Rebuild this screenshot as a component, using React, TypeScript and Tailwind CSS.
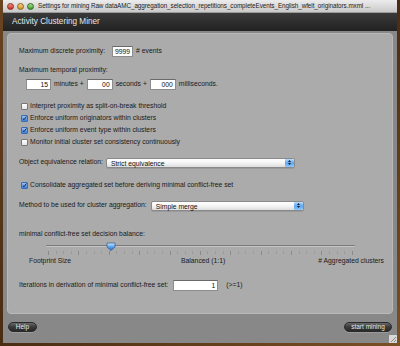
import React from "react";

const font = { fontFamily: '"Liberation Sans", Arial, sans-serif' };

function Check({ on }: { on?: boolean }) {
  return on ? (
    <div className="w-[7px] h-[7px] rounded-[1px] border border-[#3d6bb0] bg-gradient-to-b from-[#9cc3f2] to-[#3b7bd6] flex items-center justify-center">
      <svg width="7" height="7" viewBox="0 0 7 7">
        <path d="M1.2 3.6 L2.8 5.2 L6.2 0.6" stroke="#0b1f44" strokeWidth="1.3" fill="none" />
      </svg>
    </div>
  ) : (
    <div className="w-[7px] h-[7px] rounded-[1px] border border-[#777] bg-gradient-to-b from-[#ffffff] to-[#e4e4e4]" />
  );
}

function CheckRow({ on, label }: { on?: boolean; label: string }) {
  return (
    <div className="h-[12px] flex items-center gap-[2px] pl-[13px]">
      <Check on={on} />
      <span>{label}</span>
    </div>
  );
}

function Field({ value, w }: { value: string; w: string }) {
  return (
    <div className={`${w} h-[11px] bg-white border border-[#8c8c8c] border-t-[#6a6a6a] text-right pr-[2px] leading-[10px] text-[#111]`}>
      {value}
    </div>
  );
}

function Select({ value, w }: { value: string; w: string }) {
  return (
    <div className={`${w} h-[10px] flex rounded-[2px] border border-[#8a8a8a] bg-gradient-to-b from-[#ffffff] via-[#f4f4f4] to-[#dcdcdc] shadow-[0_1px_0_#9a9a9a]`}>
      <span className="flex-1 pl-[4px] leading-[9px] text-[#111]">{value}</span>
      <div className="w-[9px] h-full rounded-r-[2px] bg-gradient-to-b from-[#b9dcfb] via-[#5ea6ee] to-[#8cc8fb] flex flex-col items-center justify-center gap-[1px]">
        <svg width="3" height="2" viewBox="0 0 3 2"><path d="M0 2 L1.5 0 L3 2 Z" fill="#10203a" /></svg>
        <svg width="3" height="2" viewBox="0 0 3 2"><path d="M0 0 L1.5 2 L3 0 Z" fill="#10203a" /></svg>
      </div>
    </div>
  );
}

function Pill({ label, w }: { label: string; w: string }) {
  return (
    <div className={`${w} h-[10px] rounded-full border border-[#2a2a2a] bg-gradient-to-b from-[#6a6a6a] via-[#3a3a3a] to-[#2a2a2a] text-[#e8e8e8] text-[6.5px] flex items-center justify-center shadow-[0_1px_0_#9a9a9a]`}>
      {label}
    </div>
  );
}

export default function App() {
  const ticks = Array.from({ length: 41 }, (_, i) => i);
  return (
    <div
      className="w-[400px] h-[346px] overflow-hidden bg-gradient-to-br from-[#6a4421] via-[#4a2c12] to-[#7a5025] pl-[3px]"
      style={font}
    >
      <div className="w-[394px] h-[343px] flex flex-col bg-[#888888]">
        {/* title bar */}
        <div className="h-[13px] flex items-center bg-gradient-to-b from-[#ececec] to-[#c9c9c9] border-b border-[#9a9a9a]">
          <div className="flex gap-[3px] pl-[4px] shrink-0">
            <div className="w-[7px] h-[7px] rounded-full bg-gradient-to-b from-[#f08a7c] to-[#c8281c] border border-[#8a2a20]" />
            <div className="w-[7px] h-[7px] rounded-full bg-gradient-to-b from-[#f7d27a] to-[#d0901a] border border-[#8a6420]" />
            <div className="w-[7px] h-[7px] rounded-full bg-gradient-to-b from-[#a6e48a] to-[#3e9c2a] border border-[#2e6a20]" />
          </div>
          <span className="ml-[4px] text-[6.3px] tracking-[-0.05px] text-[#222] whitespace-nowrap">
            Settings for mining Raw dataAMC_aggregation_selection_repetitions_completeEvents_English_wfelt_originators.mxml ...
          </span>
        </div>
        {/* header */}
        <div className="h-[18px] flex items-center bg-gradient-to-b from-[#3a3a3a] to-[#222222] pl-[9px] text-[8.2px] text-[#e6e6e6]">
          Activity Clustering Miner
        </div>
        {/* panel */}
        <div className="px-[4px] pt-[2px]">
          <div className="h-[281px] rounded-[4px] bg-[#ababab] border border-[#b9b9b9] flex flex-col text-[6.8px] text-[#1a1a1a]">
            <div className="mt-[12px] h-[11px] flex items-center pl-[11px]">
              <span>Maximum discrete proximity:</span>
              <div className="ml-[7px]"><Field value="9999" w="w-[21px]" /></div>
              <span className="ml-[3px]"># events</span>
            </div>
            <div className="mt-[8px] h-[10px] flex items-center pl-[11px]">Maximum temporal proximity:</div>
            <div className="mt-[3px] h-[12px] flex items-center pl-[18px]">
              <Field value="15" w="w-[25px]" />
              <span className="ml-[3px]">minutes +</span>
              <div className="ml-[3px]"><Field value="00" w="w-[26px]" /></div>
              <span className="ml-[3px]">seconds +</span>
              <div className="ml-[3px]"><Field value="000" w="w-[26px]" /></div>
              <span className="ml-[3px]">milliseconds.</span>
            </div>
            <div className="mt-[10px] flex flex-col">
              <CheckRow label="Interpret proximity as split-on-break threshold" />
              <CheckRow on label="Enforce uniform originators within clusters" />
              <CheckRow on label="Enforce uniform event type within clusters" />
              <CheckRow label="Monitor initial cluster set consistency continuously" />
            </div>
            <div className="mt-[9px] h-[11px] flex items-center pl-[11px]">
              <span>Object equivalence relation:</span>
              <div className="ml-[3px]"><Select value="Strict equivalence" w="w-[189px]" /></div>
            </div>
            <div className="mt-[11px]">
              <CheckRow on label="Consolidate aggregated set before deriving minimal conflict-free set" />
            </div>
            <div className="mt-[9px] h-[11px] flex items-center pl-[11px]">
              <span>Method to be used for cluster aggregation:</span>
              <div className="ml-[4px]"><Select value="Simple merge" w="w-[153px]" /></div>
            </div>
            <div className="mt-[18px] h-[10px] flex items-center pl-[11px]">minimal conflict-free set decision balance:</div>
            {/* slider */}
            <div className="mt-[2px] ml-[38px] w-[309px] h-[10px] relative flex items-center">
              <div className="w-full h-[2px] bg-[#7a7a7a] border-b border-[#c4c4c4] rounded-full" />
              <svg className="absolute left-[60px] top-[1px]" width="10" height="9" viewBox="0 0 10 9">
                <defs>
                  <linearGradient id="th" x1="0" y1="0" x2="0" y2="1">
                    <stop offset="0" stopColor="#d4ecff" />
                    <stop offset="0.5" stopColor="#5aa4ee" />
                    <stop offset="1" stopColor="#2f6fc4" />
                  </linearGradient>
                </defs>
                <path d="M1 1 H9 V5 L5 8.5 L1 5 Z" fill="url(#th)" stroke="#3a5f96" strokeWidth="0.8" />
              </svg>
            </div>
            <div className="ml-[40px] w-[305px] h-[4px] flex justify-between">
              {ticks.map((i) => (
                <div key={i} className={i % 4 === 0 ? "w-px h-[4px] bg-[#8a8a8a]" : "w-px h-[3px] bg-[#9a9a9a]"} />
              ))}
            </div>
            <div className="mt-[1px] ml-[21px] w-[355px] h-[10px] grid grid-cols-[152px_auto_1fr] items-center">
              <span>Footprint Size</span>
              <span>Balanced (1:1)</span>
              <span className="justify-self-end"># Aggregated clusters</span>
            </div>
            <div className="mt-[14px] h-[11px] flex items-center pl-[11px]">
              <span>Iterations in derivation of minimal conflict-free set:</span>
              <div className="ml-[5px]"><Field value="1" w="w-[45px]" /></div>
              <span className="ml-[8px]">(&gt;=1)</span>
            </div>
          </div>
        </div>
        {/* footer */}
        <div className="flex-1 flex items-center justify-between px-[5px] pb-[3px] relative">
          <Pill label="Help" w="w-[29px]" />
          <Pill label="start mining" w="w-[48px]" />
          <svg className="absolute right-0 bottom-0" width="8" height="8" viewBox="0 0 8 8">
            <rect width="8" height="8" fill="#d8d8d8" />
            <path d="M7 2 L2 7 M7 5 L5 7" stroke="#777" strokeWidth="0.8" />
          </svg>
        </div>
      </div>
    </div>
  );
}
